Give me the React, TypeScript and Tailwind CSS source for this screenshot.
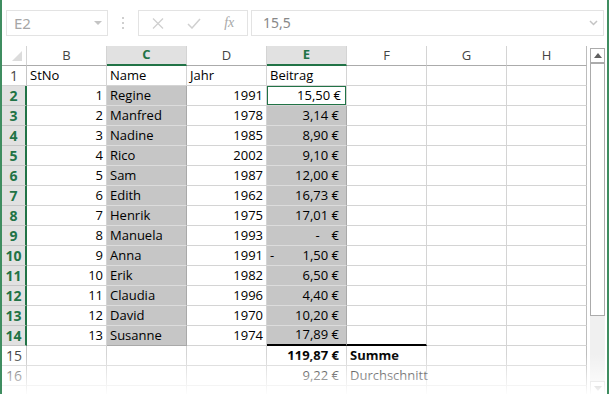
import React from 'react';

type ECell = { kind: 'num'; v: string } | { kind: 'zero' } | { kind: 'neg'; v: string };

const rows: { b: string; c: string; d: string; e: ECell }[] = [
  { b: '1', c: 'Regine', d: '1991', e: { kind: 'num', v: '15,50 €' } },
  { b: '2', c: 'Manfred', d: '1978', e: { kind: 'num', v: '3,14 €' } },
  { b: '3', c: 'Nadine', d: '1985', e: { kind: 'num', v: '8,90 €' } },
  { b: '4', c: 'Rico', d: '2002', e: { kind: 'num', v: '9,10 €' } },
  { b: '5', c: 'Sam', d: '1987', e: { kind: 'num', v: '12,00 €' } },
  { b: '6', c: 'Edith', d: '1962', e: { kind: 'num', v: '16,73 €' } },
  { b: '7', c: 'Henrik', d: '1975', e: { kind: 'num', v: '17,01 €' } },
  { b: '8', c: 'Manuela', d: '1993', e: { kind: 'zero' } },
  { b: '9', c: 'Anna', d: '1991', e: { kind: 'neg', v: '1,50 €' } },
  { b: '10', c: 'Erik', d: '1982', e: { kind: 'num', v: '6,50 €' } },
  { b: '11', c: 'Claudia', d: '1996', e: { kind: 'num', v: '4,40 €' } },
  { b: '12', c: 'David', d: '1970', e: { kind: 'num', v: '10,20 €' } },
  { b: '13', c: 'Susanne', d: '1974', e: { kind: 'num', v: '17,89 €' } },
];

const base =
  "h-[20px] border-r border-b border-[#d4d4d4] text-[13px] text-black px-[3px] flex items-center whitespace-nowrap font-['Open_Sans',sans-serif]";
const selC =
  "h-[20px] border-r border-b border-r-[#a9a9a9] border-b-[#dcdcdc] bg-[#c6c6c6] text-[13px] text-black px-[3px] flex items-center whitespace-nowrap font-['Open_Sans',sans-serif]";
const selCLast =
  "h-[20px] border-r border-b border-r-[#a9a9a9] border-b-[#a9a9a9] bg-[#c6c6c6] text-[13px] text-black px-[3px] flex items-center whitespace-nowrap font-['Open_Sans',sans-serif]";
const lastCol =
  "h-[20px] border-r border-b border-r-[#bdbdbd] border-b-[#d4d4d4]";
const rhSel =
  "h-[20px] border-r-2 border-b border-r-[#217346] border-b-[#c6c6c6] bg-[#e1e1e1] text-[#217346] font-bold text-[14px] flex items-center justify-center font-['Open_Sans',sans-serif]";
const rhNorm =
  "h-[20px] border-r border-b border-r-[#c6c6c6] border-b-[#d4d4d4] bg-white text-[#444] text-[14px] flex items-center justify-center font-['Open_Sans',sans-serif]";

function EContent({ e }: { e: ECell }) {
  if (e.kind === 'zero')
    return (
      <div className="w-full flex justify-end pr-[4px]">
        <span className="mr-[12px]">-</span>
        <span>€</span>
      </div>
    );
  if (e.kind === 'neg')
    return (
      <div className="w-full flex justify-between pr-[4px]">
        <span>-</span>
        <span>{e.v}</span>
      </div>
    );
  return <div className="w-full text-right pr-[4px]">{e.v}</div>;
}

export default function App() {
  return (
    <div className="w-[609px] h-[394px] relative overflow-hidden bg-white border-l-2 border-r-2 border-[#3f8d60]">
      {/* Formula bar */}
      <div className="h-[46px] flex items-start pt-[10px]">
        <div className="ml-[4px] w-[102px] h-[26px] border border-[#e3e3e3] flex items-center justify-between pl-[7px] pr-[5px]">
          <span className="text-[15px] text-[#a6a6a6] font-['Noto_Sans',sans-serif] leading-none">E2</span>
          <svg width="8" height="4" viewBox="0 0 8 4">
            <path d="M0 0h8L4 4z" fill="#c4c4c4" />
          </svg>
        </div>
        <div className="w-[30px] h-[26px] flex flex-col items-center justify-center gap-[3px]">
          <div className="w-[2px] h-[2px] bg-[#cfcfcf]" />
          <div className="w-[2px] h-[2px] bg-[#cfcfcf]" />
          <div className="w-[2px] h-[2px] bg-[#cfcfcf]" />
        </div>
        <div className="w-[110px] h-[26px] border border-[#e3e3e3] flex items-center">
          <div className="w-[37px] flex justify-center pl-[1px]">
            <svg width="12" height="11" viewBox="0 0 12 11">
              <path d="M1 0.5L11 10.5M11 0.5L1 10.5" stroke="#d0d0d0" strokeWidth="1.3" fill="none" />
            </svg>
          </div>
          <div className="w-[36px] flex justify-center">
            <svg width="14" height="11" viewBox="0 0 14 11">
              <path d="M1 6L5 10L13 1" stroke="#d0d0d0" strokeWidth="1.5" fill="none" />
            </svg>
          </div>
          <div className="w-[36px] flex justify-center">
            <span className="text-[14px] italic text-[#a8a8a8] font-['Liberation_Serif',serif] leading-none">
              fx
            </span>
          </div>
        </div>
        <div className="ml-[3px] w-[353px] h-[26px] border border-[#e3e3e3] flex items-center justify-between pl-[11px] pr-[5px]">
          <span className="text-[14px] text-[#888] font-['Noto_Sans',sans-serif] leading-none">15,5</span>
          <svg width="9" height="6" viewBox="0 0 9 6">
            <path d="M1 1L4.5 4.5L8 1" stroke="#c4c4c4" strokeWidth="1.5" fill="none" />
          </svg>
        </div>
      </div>

      {/* Grid area */}
      <div className="flex items-start">
        <div className="grid grid-cols-[25px_repeat(7,80px)] auto-rows-[20px]">
          {/* header row */}
          <div className="h-[20px] border-r border-b border-r-[#d4d4d4] border-b-[#ababab] bg-white flex items-end justify-end pr-[4px] pb-[4px]">
            <svg width="10" height="10" viewBox="0 0 10 10">
              <path d="M10 0V10H0z" fill="#dcdcdc" />
            </svg>
          </div>
          <div className="h-[20px] border-r border-b border-r-[#d4d4d4] border-b-[#ababab] bg-white text-[#444] text-[13px] flex items-center justify-center font-['Open_Sans',sans-serif]">B</div>
          <div className="h-[20px] border-r border-b-2 border-r-[#d4d4d4] border-b-[#217346] bg-[#e1e1e1] text-[#217346] font-bold text-[13px] flex items-center justify-center font-['Open_Sans',sans-serif]">C</div>
          <div className="h-[20px] border-r border-b border-r-[#d4d4d4] border-b-[#ababab] bg-white text-[#444] text-[13px] flex items-center justify-center font-['Open_Sans',sans-serif]">D</div>
          <div className="h-[20px] border-r border-b-2 border-r-[#d4d4d4] border-b-[#217346] bg-[#e1e1e1] text-[#217346] font-bold text-[13px] flex items-center justify-center font-['Open_Sans',sans-serif]">E</div>
          <div className="h-[20px] border-r border-b border-r-[#d4d4d4] border-b-[#ababab] bg-white text-[#444] text-[13px] flex items-center justify-center font-['Open_Sans',sans-serif]">F</div>
          <div className="h-[20px] border-r border-b border-r-[#d4d4d4] border-b-[#ababab] bg-white text-[#444] text-[13px] flex items-center justify-center font-['Open_Sans',sans-serif]">G</div>
          <div className="h-[20px] border-r border-b border-r-[#bdbdbd] border-b-[#ababab] bg-white text-[#444] text-[13px] flex items-center justify-center font-['Open_Sans',sans-serif]">H</div>

          {/* row 1 */}
          <div className={rhNorm}>1</div>
          <div className={base}>StNo</div>
          <div className={base}>Name</div>
          <div className={base}>Jahr</div>
          <div className={base}>Beitrag</div>
          <div className={base} />
          <div className={base} />
          <div className={lastCol} />

          {rows.map((r, i) => {
            const n = i + 2;
            const isLast = n === 14;
            const first = n === 2;
            return (
              <React.Fragment key={n}>
                <div className={rhSel}>{n}</div>
                <div className={base}>
                  <div className="w-full text-right pr-[0px]">{r.b}</div>
                </div>
                <div className={isLast ? selCLast : selC}>{r.c}</div>
                <div className={base}>
                  <div className="w-full text-right">{r.d}</div>
                </div>
                {first ? (
                  <div className="h-[20px] border-r border-b border-[#d4d4d4] bg-white text-[13px] text-black flex items-center whitespace-nowrap font-['Open_Sans',sans-serif]">
                    <div className="w-full h-full border border-[#217346] flex items-center pl-[3px]">
                      <EContent e={r.e} />
                    </div>
                  </div>
                ) : isLast ? (
                  <div className="h-[20px] border-r border-b-2 border-r-[#a9a9a9] border-b-black bg-[#c6c6c6] text-[13px] text-black px-[3px] flex items-center whitespace-nowrap font-['Open_Sans',sans-serif]">
                    <EContent e={r.e} />
                  </div>
                ) : (
                  <div className={selC}>
                    <EContent e={r.e} />
                  </div>
                )}
                {isLast ? (
                  <div className="h-[20px] border-r border-b-2 border-r-[#d4d4d4] border-b-black" />
                ) : (
                  <div className={base} />
                )}
                <div className={base} />
                <div className={lastCol} />
              </React.Fragment>
            );
          })}

          {/* row 15 */}
          <div className={rhNorm}>15</div>
          <div className={base} />
          <div className={base} />
          <div className={base} />
          <div className={base + ' font-bold'}>
            <div className="w-full text-right pr-[4px]">119,87 €</div>
          </div>
          <div className={base + ' font-bold'}>Summe</div>
          <div className={base} />
          <div className={lastCol} />

          {/* row 16 */}
          <div className={rhNorm}>16</div>
          <div className={base} />
          <div className={base} />
          <div className={base} />
          <div className={base}>
            <div className="w-full text-right pr-[4px]">9,22 €</div>
          </div>
          <div className={base}>Durchschnitt</div>
          <div className={base} />
          <div className={lastCol} />

          {/* row 17 (cut off by the window edge) */}
          <div className={rhNorm} />
          <div className={base} />
          <div className={base} />
          <div className={base} />
          <div className={base} />
          <div className={base} />
          <div className={base} />
          <div className={lastCol} />
        </div>

        {/* Scrollbar */}
        <div className="ml-[3px] mt-[2px] w-[15px] flex flex-col">
          <div className="h-[15px] border border-[#ababab] bg-white flex items-center justify-center">
            <svg width="8" height="5" viewBox="0 0 8 5">
              <path d="M0 5L4 0L8 5z" fill="#606060" />
            </svg>
          </div>
          <div className="h-[253px] border border-[#ababab] bg-white" />
          <div className="h-[65px] bg-[#f0f0f0]" />
          <div className="h-[15px] border border-[#c8c8c8] bg-white flex items-center justify-center">
            <svg width="8" height="5" viewBox="0 0 8 5">
              <path d="M0 0L4 5L8 0z" fill="#909090" />
            </svg>
          </div>
        </div>
      </div>

      {/* bottom fade */}
      <div className="absolute left-0 right-0 bottom-0 h-[40px] bg-linear-to-b from-white/0 to-white/95 pointer-events-none" />
    </div>
  );
}
